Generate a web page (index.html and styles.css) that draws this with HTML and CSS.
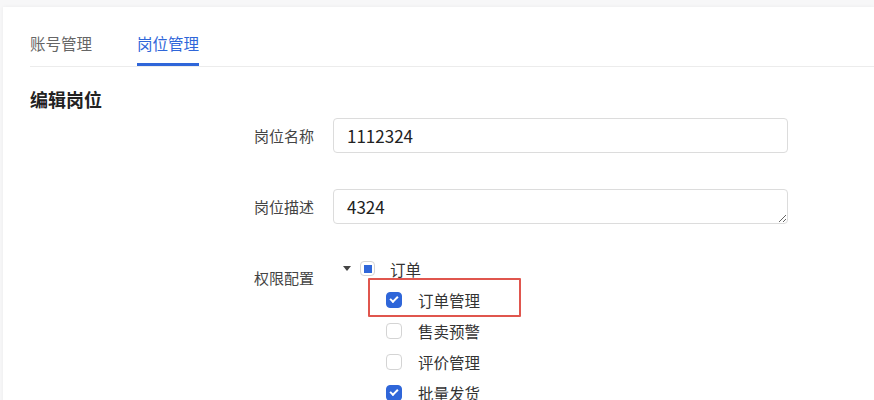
FILE: index.html
```html
<!DOCTYPE html>
<html lang="zh-CN">
<head>
    <meta charset="UTF-8">
    <title>编辑岗位</title>
    <link rel="stylesheet" href="styles.css">
</head>
<body>
    <div class="card">
        <div class="tabs">
            <div class="tab">账号管理</div>
            <div class="tab active">岗位管理</div>
        </div>
        <h2 class="title">编辑岗位</h2>
        <div class="form">
            <div class="form-row">
                <label class="form-label">岗位名称</label>
                <input class="input" type="text" value="1112324">
            </div>
            <div class="form-row">
                <label class="form-label">岗位描述</label>
                <textarea class="input textarea">4324</textarea>
            </div>
            <div class="form-row">
                <label class="form-label perm-label">权限配置</label>
                <div class="tree">
                    <div class="tree-node">
                        <span class="caret"></span>
                        <span class="check half"></span>
                        <span class="node-text">订单</span>
                    </div>
                    <div class="tree-children">
                        <div class="tree-node child marked">
                            <span class="check on"></span>
                            <span class="node-text">订单管理</span>
                        </div>
                        <div class="tree-node child">
                            <span class="check"></span>
                            <span class="node-text">售卖预警</span>
                        </div>
                        <div class="tree-node child">
                            <span class="check"></span>
                            <span class="node-text">评价管理</span>
                        </div>
                        <div class="tree-node child">
                            <span class="check on"></span>
                            <span class="node-text">批量发货</span>
                        </div>
                    </div>
                </div>
            </div>
        </div>
    </div>
</body>
</html>
```

FILE: styles.css
```css
body, html {
    margin: 0;
    padding: 0;
    height: 100%;
    background-color: #f7f7f8;
    font-family: "Noto Sans CJK SC", "Noto Sans", sans-serif;
    color: #333;
    overflow: hidden;
}
.card {
    margin: 7px 0 0 3px;
    background-color: #fff;
    height: 100%;
    box-shadow: 0 0 4px rgba(0, 0, 0, 0.05);
    padding: 0 0 0 27px;
}
.tabs {
    display: flex;
    gap: 45px;
    border-bottom: 1px solid #ececec;
    height: 59px;
}
.tab {
    font-size: 15.5px;
    color: #666;
    line-height: 24px;
    padding-top: 24px;
    box-sizing: border-box;
    height: 59px;
}
.tab.active {
    color: #2f66d9;
    border-bottom: 3px solid #2f66d9;
}
.title {
    margin: 0;
    padding-top: 19px;
    font-size: 18px;
    font-weight: 700;
    color: #222;
    line-height: 27px;
}
.form {
    padding-left: 224px;
    padding-top: 5px;
}
.form-row {
    display: flex;
    align-items: flex-start;
    margin-bottom: 36px;
}
.form-label {
    width: 62px;
    margin-right: 17px;
    font-size: 15px;
    color: #444;
    line-height: 35px;
    white-space: nowrap;
}
.input {
    box-sizing: border-box;
    width: 455px;
    height: 35px;
    border: 1px solid #dcdcdc;
    border-radius: 4px;
    padding: 0 13px;
    font-family: inherit;
    font-size: 17px;
    color: #222;
    outline: none;
}
.textarea {
    resize: vertical;
    line-height: 33px;
    padding-top: 0;
    overflow: hidden;
}
.perm-label {
    margin-top: 0;
}
.tree {
    font-size: 15.5px;
    margin-top: -7px;
}
.tree-node {
    display: flex;
    align-items: center;
    height: 31px;
    position: relative;
}
.caret {
    width: 0;
    height: 0;
    margin-left: 10px;
    margin-right: 9px;
    border-left: 4px solid transparent;
    border-right: 4px solid transparent;
    border-top: 5px solid #444;
    margin-top: -1px;
}
.check {
    box-sizing: border-box;
    width: 16px;
    height: 16px;
    border: 1px solid #d4d4d4;
    border-radius: 4px;
    background-color: #fff;
    margin-right: 16px;
    display: inline-flex;
    align-items: center;
    justify-content: center;
}
.check.half {
    width: 15px;
    height: 15px;
    margin-right: 15px;
}
.check.half::after {
    content: "";
    width: 8px;
    height: 8px;
    background-color: #2f66d9;
}
.check.on {
    background-color: #2f66d9;
    border-color: #2f66d9;
}
.check.on::after {
    content: "";
    width: 6px;
    height: 3px;
    border-left: 2px solid #fff;
    border-bottom: 2px solid #fff;
    transform: rotate(-45deg);
    margin-top: -2px;
}
.tree-children {
    padding-left: 53px;
}
.node-text {
    color: #333;
}
.marked::before {
    content: "";
    position: absolute;
    left: -18px;
    top: -6px;
    width: 153px;
    height: 39px;
    box-sizing: border-box;
    border: 2px solid #e0564e;
    border-radius: 1px;
}
```
